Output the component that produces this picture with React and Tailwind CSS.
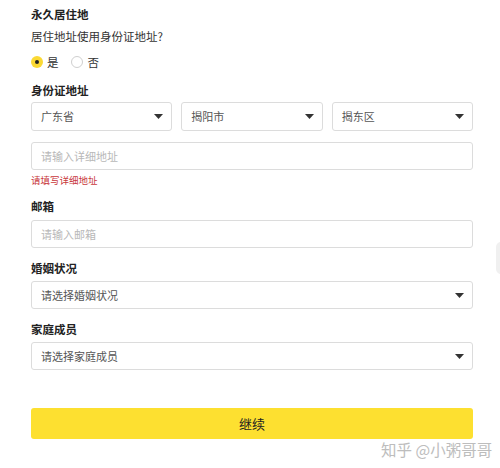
const font = { fontFamily: '"Noto Sans CJK SC", "Noto Sans", sans-serif' };

const Caret = () => (
  <svg width="9" height="5" viewBox="0 0 9 5" className="shrink-0">
    <path d="M0 0 L9 0 L4.5 5 Z" fill="#333" />
  </svg>
);

const Select = ({ value, className = "" }) => (
  <div
    className={`h-[28px] flex items-center justify-between pl-[9px] pr-[8px] border border-[#dcdcdc] rounded-[3px] bg-white text-[11px] text-[#555] ${className}`}
  >
    <span>{value}</span>
    <Caret />
  </div>
);

const Input = ({ placeholder }) => (
  <div className="h-[28px] flex items-center px-[9px] border border-[#dcdcdc] rounded-[3px] bg-white text-[11px] text-[#b8b8b8]">
    {placeholder}
  </div>
);

const Label = ({ children, className = "" }) => (
  <div className={`text-[11.5px] font-bold text-[#222] leading-[16px] ${className}`}>{children}</div>
);

export default function App() {
  return (
    <div className="relative w-[500px] h-[468px] bg-white overflow-hidden" style={font}>
      <div className="pl-[31px] pr-[27px] pt-[6px]">
        <Label>永久居住地</Label>
        <div className="mt-[6px] text-[11.5px] text-[#333] leading-[16px]">居住地址使用身份证地址?</div>

        <div className="mt-[10px] flex items-center text-[11.5px] text-[#333] leading-[16px]">
          <span className="w-[12px] h-[12px] rounded-full bg-[#fbd934] flex items-center justify-center">
            <span className="w-[4px] h-[4px] rounded-full bg-[#222]" />
          </span>
          <span className="ml-[4px]">是</span>
          <span className="ml-[12px] w-[12px] h-[12px] rounded-full border border-[#cfcfcf]" />
          <span className="ml-[5px]">否</span>
        </div>

        <Label className="mt-[12px]">身份证地址</Label>
        <div className="mt-[4px] flex gap-[9px]">
          <Select value="广东省" className="flex-1 h-[29px]" />
          <Select value="揭阳市" className="flex-1 h-[29px]" />
          <Select value="揭东区" className="flex-1 h-[29px]" />
        </div>

        <div className="mt-[11px]">
          <Input placeholder="请输入详细地址" />
        </div>
        <div className="mt-[3px] text-[9.5px] text-[#c8373c] leading-[14px]">请填写详细地址</div>

        <Label className="mt-[11px]">邮箱</Label>
        <div className="mt-[6px]">
          <Input placeholder="请输入邮箱" />
        </div>

        <Label className="mt-[12px]">婚姻状况</Label>
        <div className="mt-[5px]">
          <Select value="请选择婚姻状况" />
        </div>

        <Label className="mt-[12px]">家庭成员</Label>
        <div className="mt-[5px]">
          <Select value="请选择家庭成员" />
        </div>

        <button className="mt-[38px] w-full h-[31px] rounded-[3px] bg-[#fde030] text-[13px] text-[#222] flex items-center justify-center">
          继续
        </button>
      </div>

      <div className="absolute right-[-6px] top-[242px] w-[10px] h-[32px] rounded-full bg-[#f0f0f0]" />

      <div
        className="absolute left-[381px] top-[438px] text-[15.5px] text-[#bdbdbd] leading-[22px]"
        style={{ textShadow: "0 0 1px #fff" }}
      >
        知乎 @小粥哥哥
      </div>
    </div>
  );
}
